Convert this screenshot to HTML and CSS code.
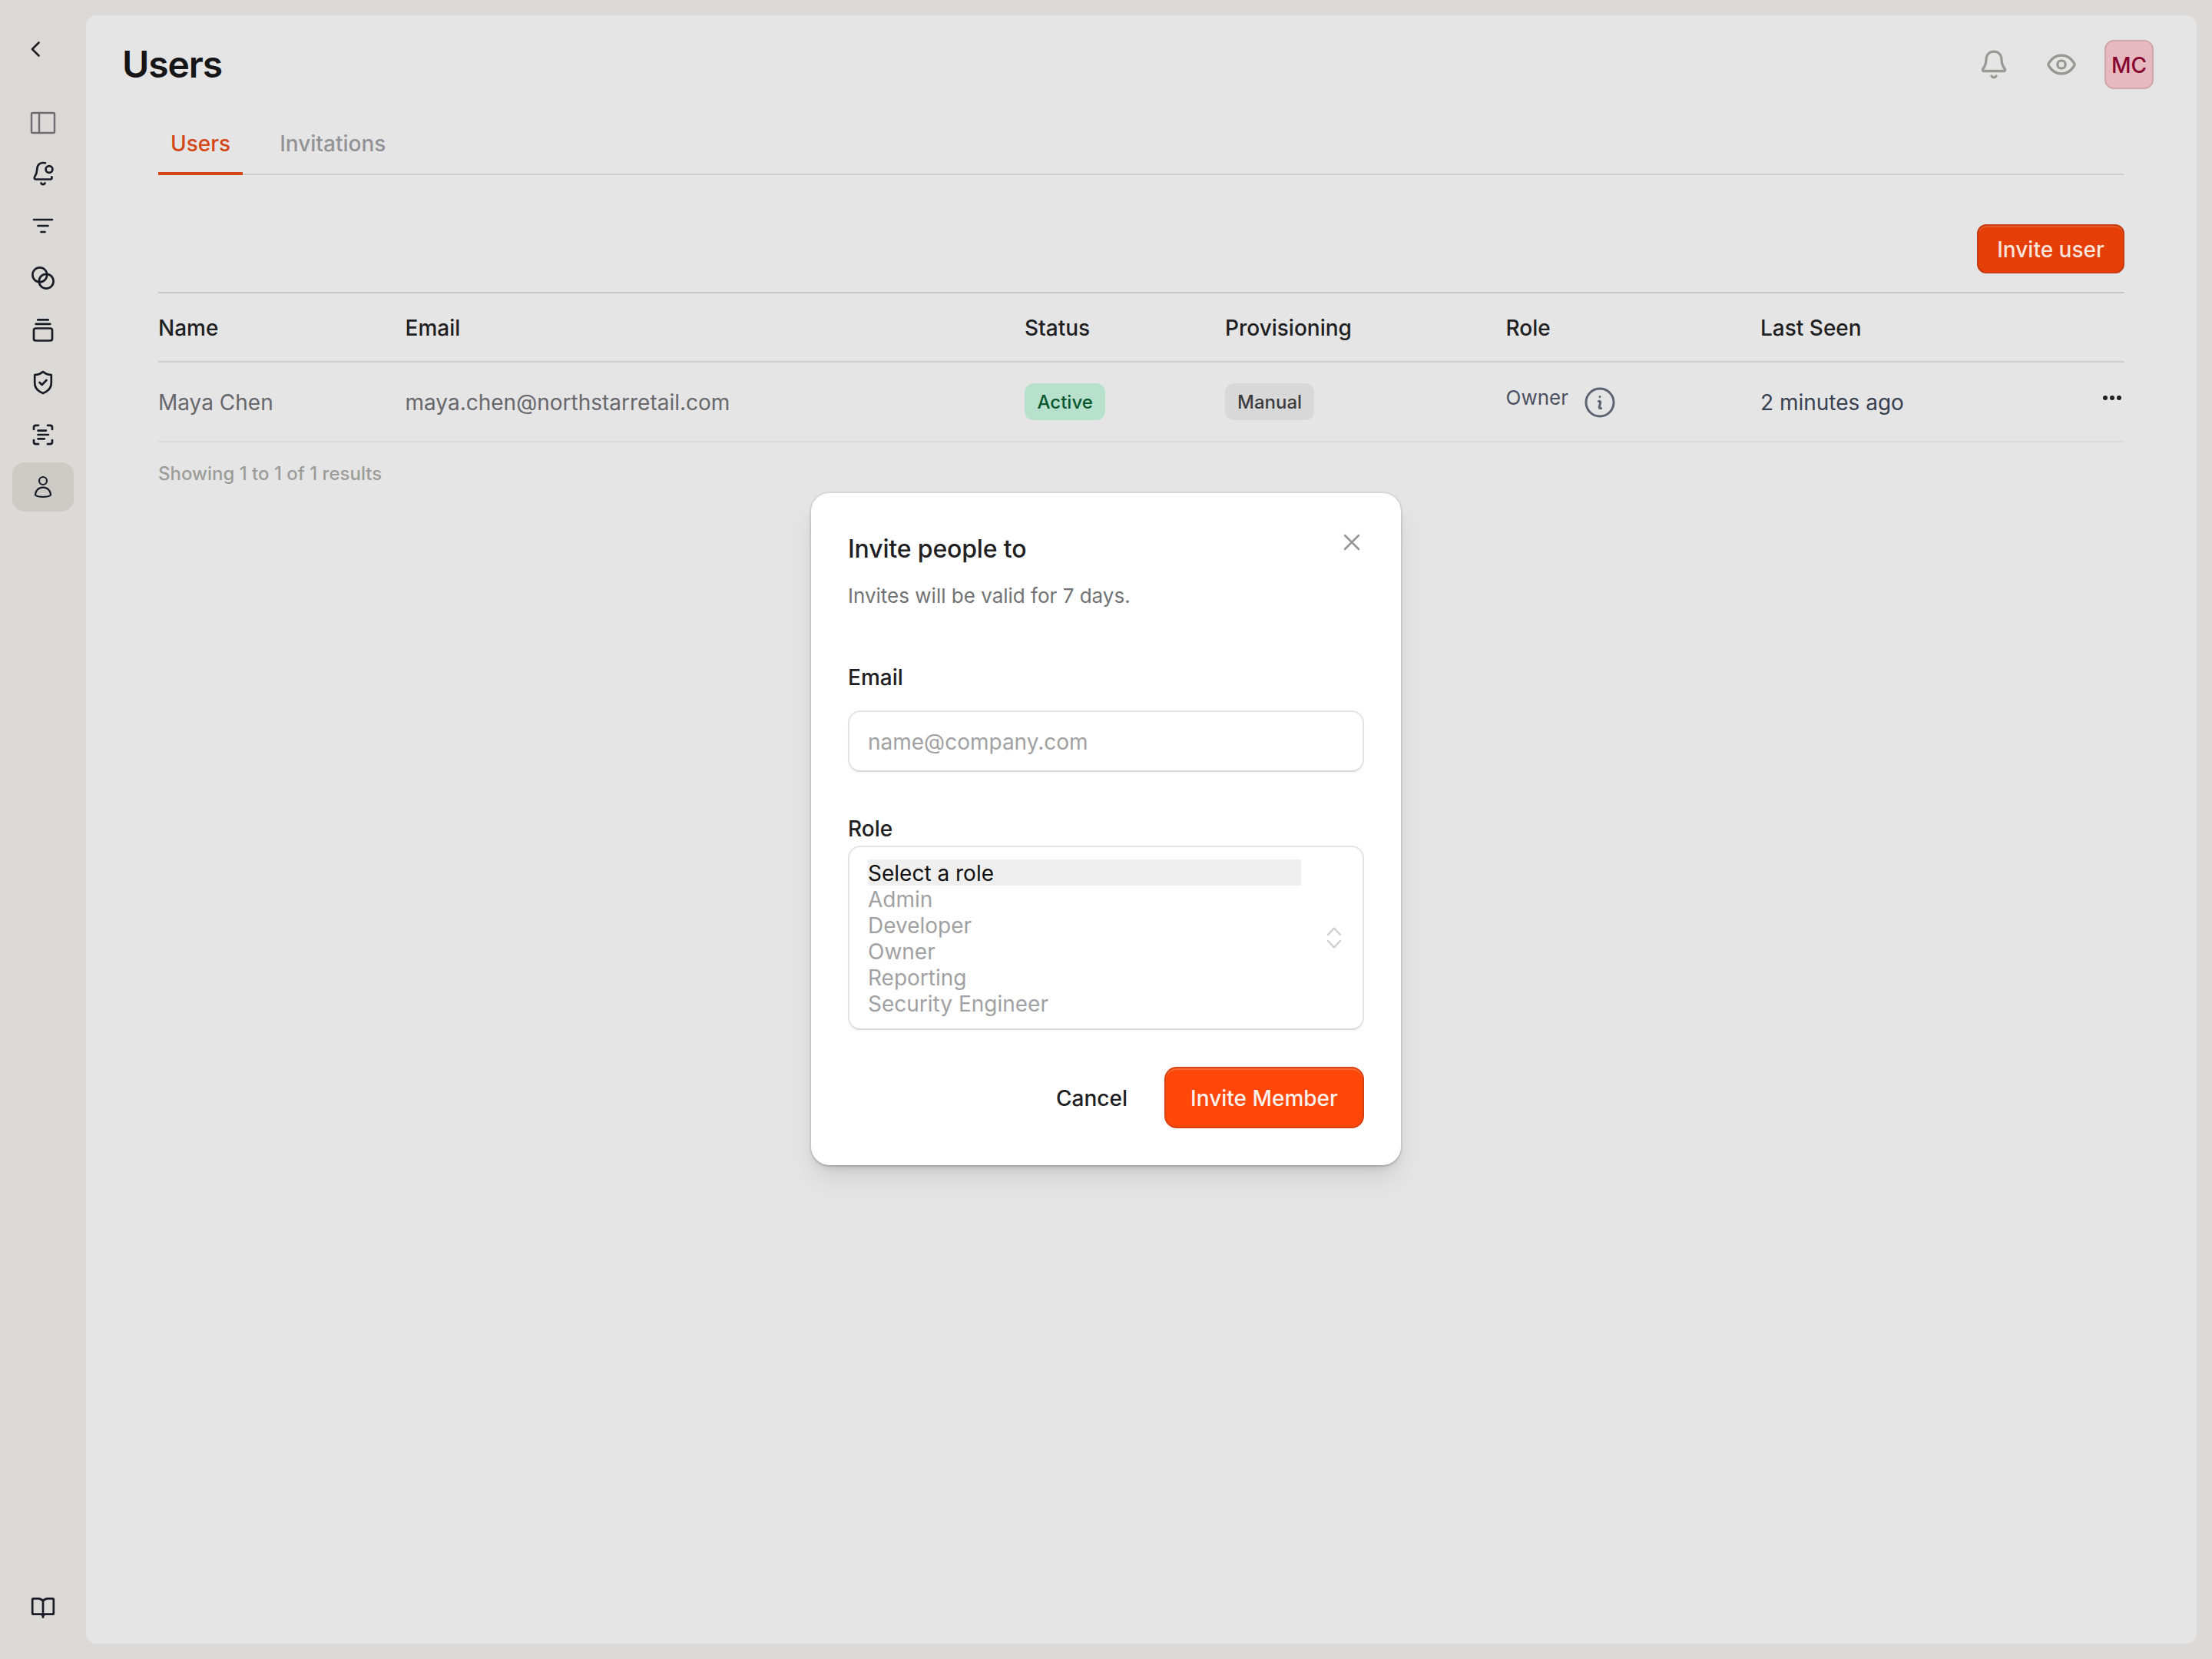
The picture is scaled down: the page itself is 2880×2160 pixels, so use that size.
FILE: index.html
```html
<!DOCTYPE html>
<html lang="en">
<head>
<meta charset="utf-8">
<title>Users</title>
<link rel="stylesheet" href="styles.css">
</head>
<body>
<div class="app">
  <aside class="sidebar">
    <a class="nav-item back"><svg class="icon" viewBox="0 0 48 48"><path d="M29.500 15.500 21 24l8.500 8.500"/></svg></a>
    <a class="nav-item toggle"><svg class="icon muted" viewBox="0 0 48 48"><rect x="9" y="11" width="30" height="26" rx="1.500"/><path d="M19 11v26"/></svg></a>
    <nav class="nav">
      <a class="nav-item"><svg class="icon" viewBox="0 0 48 48"><path d="M27 10.300C19.500 8.800 16.500 13 16.300 18c-.2 5-.8 6.500-2.900 9.700-1.300 2-.6 3.800 1.300 3.800h18.600c2 0 2.700-1.300 2-3.200"/><circle cx="32" cy="18.500" r="4.400"/><path d="M21.500 36.500c1.200 2.200 3.800 2.200 5 0"/></svg></a>
      <a class="nav-item"><svg class="icon" viewBox="0 0 48 48"><path d="M12 16h24M17.500 24h13M21.500 32h5"/></svg></a>
      <a class="nav-item"><svg class="icon" viewBox="0 0 48 48"><circle cx="19.800" cy="19.800" r="9.400"/><circle cx="28.200" cy="28.200" r="9.400"/></svg></a>
      <a class="nav-item"><svg class="icon" viewBox="0 0 48 48"><path d="M17.300 10.400h13.400M14.700 15.900h18.600"/><rect x="12" y="21.500" width="24" height="16" rx="2.500"/></svg></a>
      <a class="nav-item"><svg class="icon" viewBox="0 0 48 48"><path d="M24 10.200c1.200 0 1.900 1.600 4.200 2.500 2.200 1 4.300 1.300 6.600 1.500v10.300c0 6.500-4.500 11-10.800 13.500-6.300-2.500-10.800-7-10.800-13.500V14.200c2.300-.2 4.400-.5 6.600-1.500 2.300-.9 3-2.500 4.200-2.500z"/><path d="m19.500 24 3.200 3 5.800-6"/></svg></a>
      <a class="nav-item"><svg class="icon" viewBox="0 0 48 48"><path d="M12 17v-2.500q0-2.700 2.700-2.700H18M30 11.800h3.300q2.700 0 2.700 2.700V17M36 31v2.500q0 2.700-2.700 2.700H30M18 36.200h-3.300q-2.700 0-2.700-2.700V31M17.500 18.600h10.500M17.500 24h13.500M17.500 29.300h8.300"/></svg></a>
      <a class="nav-item active"><svg class="icon thin" viewBox="0 0 48 48"><circle cx="24" cy="16" r="5"/><path d="M14 34.500C14 29 18 24.600 24 24.600S34 29 34 34.500c-2 1.800-6 2.500-10 2.500s-8-.7-10-2.500z"/></svg></a>
    </nav>
    <a class="nav-item docs"><svg class="icon" viewBox="0 0 48 48"><path d="M24 14.500c-1.500-2-3-3.200-6-3.200h-6.500q-1.300 0-1.300 1.300v17.800q0 1.300 1.300 1.300H21q3 0 3 4 0-4 3-4h9.500q1.300 0 1.300-1.300V12.600q0-1.300-1.300-1.300H30c-3 0-4.500 1.200-6 3.200v21"/></svg></a>
  </aside>

  <main class="panel">
    <header class="page-header">
      <h1 class="page-title">Users</h1>
      <div class="header-actions">
        <svg class="header-icon" viewBox="0 0 48 48"><path d="M24 7.200c6 0 9.800 4.300 10 10.300.2 6 1.300 8.500 4 11.800 1.400 1.800.7 3.200-1.200 3.200H11.200c-1.900 0-2.600-1.400-1.200-3.200 2.700-3.300 3.800-5.800 4-11.800.2-6 4-10.300 10-10.300z"/><path d="M21 39c1.300 2.300 4.700 2.300 6 0"/></svg>
        <svg class="header-icon" viewBox="0 0 48 48"><path d="M7.600 26q-1.400-2 0-4C11.500 15.800 17 12 24 12s12.500 3.800 16.400 10q1.400 2 0 4C36.500 32.200 31 36 24 36S11.500 32.200 7.600 26z"/><circle cx="24" cy="24" r="5.200"/></svg>
        <span class="avatar">MC</span>
      </div>
    </header>

    <div class="content">
      <div class="tabs">
        <a class="tab selected">Users</a>
        <a class="tab">Invitations</a>
      </div>

      <div class="toolbar"><button class="btn btn-small">Invite user</button></div>

      <div class="table">
        <div class="row head">
          <span>Name</span><span>Email</span><span>Status</span><span>Provisioning</span><span>Role</span><span>Last Seen</span><span></span>
        </div>
        <div class="row body">
          <span class="quiet">Maya Chen</span>
          <span class="quiet">maya.chen@northstarretail.com</span>
          <span class="state"><span class="badge green">Active</span></span>
          <span class="state"><span class="badge gray">Manual</span></span>
          <span class="role"><span class="role-name">Owner</span><svg class="info" viewBox="0 0 24 24"><path d="m11.250 11.250.041-.020a.75.75 0 0 1 1.063.852l-.708 2.836a.75.75 0 0 0 1.063.853l.041-.021M21 12a9 9 0 1 1-18 0 9 9 0 0 1 18 0Zm-9-3.750h.008v.008H12V8.250Z"/></svg></span>
          <span class="seen">2 minutes ago</span>
          <span class="more"><svg class="dots" viewBox="0 0 28 8"><circle cx="5" cy="4" r="3"/><circle cx="14" cy="4" r="3"/><circle cx="23" cy="4" r="3"/></svg></span>
        </div>
      </div>
      <p class="summary">Showing 1 to 1 of 1 results</p>
    </div>
  </main>
</div>

<div class="overlay">
  <form class="dialog">
    <div class="dialog-head">
      <h2 class="dialog-title">Invite people to</h2>
      <svg class="close" viewBox="0 0 32 32"><path d="m7 7 18 18M25 7 7 25"/></svg>
    </div>
    <p class="dialog-note">Invites will be valid for 7 days.</p>
    <label class="label label-email" for="email">Email</label>
    <input class="field" id="email" type="text" placeholder="name@company.com">
    <span class="label label-role">Role</span>
    <div class="listbox">
      <ul class="options">
        <li class="option chosen">Select a role</li>
        <li class="option">Admin</li>
        <li class="option">Developer</li>
        <li class="option">Owner</li>
        <li class="option">Reporting</li>
        <li class="option">Security Engineer</li>
      </ul>
      <svg class="updown" viewBox="0 0 32 32"><path d="m8 12 8-8.500 8 8.500M8 20l8 8.500 8-8.500"/></svg>
    </div>
    <div class="dialog-foot">
      <button class="btn-plain" type="button">Cancel</button>
      <button class="btn btn-large" type="button">Invite Member</button>
    </div>
  </form>
</div>
</body>
</html>
```
FILE: styles.css
```css
* { box-sizing: border-box; margin: 0; padding: 0; }

body {
  background: #dbdad6;
  font-family: Inter, "Liberation Sans", sans-serif;
  font-size: 28px;
  line-height: 40px;
  color: #202022;
}

button, input { font: inherit; }

.app { display: flex; height: 2160px; padding: 20px 20px 20px 0; }

/* Sidebar */
.sidebar { width: 112px; display: flex; flex-direction: column; align-items: center; padding: 12px 0 14px; }
.nav-item { width: 80px; height: 64px; display: flex; align-items: center; justify-content: center; border-radius: 16px; }
.nav { display: flex; flex-direction: column; gap: 4px; margin-top: 2px; }
.toggle { margin-top: 32px; }
.docs { margin-top: auto; }
.active { background: #cccbc6; }
.icon { width: 48px; height: 48px; fill: none; stroke: #171c26; stroke-width: 2.700; stroke-linecap: round; stroke-linejoin: round; }
.icon.muted { stroke: #6d6d71; stroke-width: 2.400; }
.icon.thin { stroke-width: 2.200; }
.back { padding-right: 22px; }
.back .icon { stroke: #202022; }

/* Main panel */
.panel { flex: 1; background: #e5e5e5; border-radius: 14px; }
.page-header { height: 128px; padding: 0 56px 0 47px; display: flex; align-items: center; justify-content: space-between; }
.page-title { font-size: 48px; line-height: 56px; font-weight: 600; letter-spacing: -1.100px; color: #161618; }
.header-actions { display: flex; align-items: center; gap: 40px; }
.header-icon { width: 48px; height: 48px; fill: none; stroke: #999993; stroke-width: 3.300; stroke-linecap: round; stroke-linejoin: round; }
.avatar { width: 64px; height: 64px; margin-left: -8px; border: 2px solid #cfa7af; border-radius: 12px; background: #e6b8c0; color: #85052f; font-weight: 500; line-height: 62px; text-align: center; }

.content { padding: 0 94px; }
.tabs { display: flex; gap: 32px; height: 80px; padding-top: 19px; box-shadow: inset 0 -2px #cfcfcf; }
.tab { padding: 0 16px; font-weight: 500; color: #929297; }
.tab.selected { color: #d44518; border-bottom: 4px solid #d44518; }

.toolbar { height: 152px; padding-top: 64px; display: flex; justify-content: flex-end; }
.btn { padding-top: 2px; border: 2px solid #c43d14; color: #fbe3da; font-weight: 500; }
.btn-small { width: 192px; height: 64px; border-radius: 12px; background: #e53e07; box-shadow: inset 0 2px #e95a2b; }

.table { border-top: 2px solid #c7c7c7; }
.row { display: grid; grid-template-columns: 321.500px 806.500px 261px 365.500px 331.500px 1fr 30px; align-items: center; height: 104px; border-bottom: 2px solid #dbdbdb; }
.row.head { height: 90px; border-bottom-color: #cdcdcd; font-weight: 500; padding-top: 1px; }
.row.body { padding-top: 1px; }
.quiet, .seen { padding-top: 1px; }
.quiet { color: #67676c; }
.state { padding-bottom: 2px; }
.badge { display: inline-block; height: 48px; padding: 1px 16px 0; border-radius: 12px; font-size: 24px; line-height: 48px; font-weight: 500; vertical-align: top; }
.green { padding: 1px 16.500px 0; background: #b7e1cc; color: #07572f; }
.gray { background: #d8d8d8; color: #3c3c40; }
.role { display: flex; align-items: center; gap: 17px; color: #4a5060; font-size: 26px; }
.role-name { padding-bottom: 12px; }
.info { width: 48px; height: 48px; fill: none; stroke: #5e6370; stroke-width: 1.500; stroke-linecap: round; stroke-linejoin: round; }
.seen { color: #374050; }
.dots { display: block; width: 28px; height: 8px; margin-bottom: 12px; fill: #202022; }
.summary { padding-top: 21px; font-size: 24px; font-weight: 500; color: #9c9c98; }

/* Invite dialog */
.overlay { position: absolute; inset: 0; height: 2160px; display: flex; align-items: flex-start; justify-content: center; padding-top: 642px; }
.dialog { width: 768px; padding: 48px; border-radius: 24px; background: #fff; box-shadow: 0 0 0 2px rgba(0, 0, 0, .05), 0 2px 3px rgba(0, 0, 0, .12), 0 20px 36px -6px rgba(0, 0, 0, .11), 0 8px 12px -4px rgba(0, 0, 0, .08); }
.dialog-head { display: flex; justify-content: space-between; }
.dialog-title { padding-top: 1px; font-size: 32px; line-height: 48px; font-weight: 500; letter-spacing: -0.150px; }
.close { width: 32px; height: 32px; fill: none; stroke: #949494; stroke-width: 2.500; stroke-linecap: round; }
.dialog-note { margin-top: 17px; font-size: 26px; color: #727275; }
.label { display: block; font-weight: 500; }
.label-email { margin: 66px 0 23px; }
.label-role { margin-top: 52px; line-height: 44px; }
.field { display: block; width: 100%; height: 80px; padding: 2px 24px 0; }
.field, .listbox { border: 2px solid #e4e4e4; border-bottom-color: #dadada; border-radius: 16px; background: #fff; box-shadow: 0 2px 3px rgba(0, 0, 0, .04); outline: none; }
.field::placeholder { color: #a1a1a3; opacity: 1; }
.listbox { display: flex; align-items: center; justify-content: space-between; height: 240px; padding: 0 21px 0 24px; }
.options { width: 564px; list-style: none; color: #a1a1a3; }
.option { height: 34px; line-height: 36px; }
.chosen { background: #efefef; color: #101010; }
.updown { width: 32px; height: 32px; fill: none; stroke: #cfcfcf; stroke-width: 2.400; stroke-linecap: round; stroke-linejoin: round; }
.dialog-foot { margin-top: 48px; display: flex; justify-content: flex-end; align-items: center; gap: 14px; }
.btn-plain { height: 80px; padding: 2px 34px 0; border: 0; background: none; color: #202022; font-weight: 500; }
.btn-large { width: 260px; height: 80px; border-color: #d6410f; border-radius: 16px; background: #ff470a; color: #fff1eb; box-shadow: inset 0 2px #ff6c3a; }
```
